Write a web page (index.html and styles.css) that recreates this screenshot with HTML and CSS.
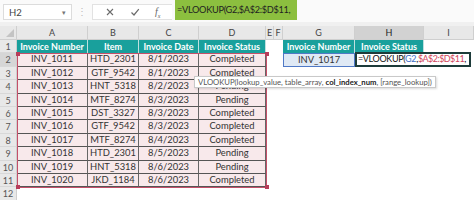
FILE: index.html
```html
<!DOCTYPE html>
<html lang="en">
<head>
    <meta charset="UTF-8" />
    <title>VLOOKUP sheet</title>
    <link rel="stylesheet" href="styles.css">
</head>
<body>
    <div id="formulaBar">
        <div class="name-box"><span>H2</span><span class="caret">&#9662;</span></div>
        <div class="grip">&#8942;</div>
        <div class="fx-box">
            <svg class="ico" viewBox="0 0 10 10" width="10" height="10"><path d="M2 2 L8 8 M8 2 L2 8" stroke="#6b6b6b" stroke-width="1.1" fill="none"/></svg>
            <svg class="ico" viewBox="0 0 10 10" width="10" height="10"><path d="M1.5 5.5 L4 8 L8.8 2.2" stroke="#6b6b6b" stroke-width="1.2" fill="none"/></svg>
            <span class="fx">f<sub>x</sub></span>
        </div>
        <div class="formula">=VLOOKUP(G2,$A$2:$D$11,</div>
    </div>
    <div class="band"></div>

    <div id="sheet">
        <!-- column headers -->
        <div class="corner"></div>
        <div class="colh">A</div>
        <div class="colh">B</div>
        <div class="colh">C</div>
        <div class="colh">D</div>
        <div class="colh">E</div>
        <div class="colh">F</div>
        <div class="colh">G</div>
        <div class="colh sel">H</div>
        <div class="colh">I</div>

        <!-- row 1 -->
        <div class="rowh">1</div>
        <div class="th">Invoice Number</div>
        <div class="th">Item</div>
        <div class="th">Invoice Date</div>
        <div class="th">Invoice Status</div>
        <div></div><div></div>
        <div class="th">Invoice Number</div>
        <div class="th">Invoice Status</div>
        <div></div>

        <!-- row 2 -->
        <div class="rowh sel">2</div>
        <div class="td">INV_1011</div><div class="td">HTD_2301</div><div class="td">8/1/2023</div><div class="td">Completed</div>
        <div></div><div></div>
        <div class="lookup">INV_1017</div>
        <div class="editing">=VLOOKUP(<span class="ref-g">G2</span>,<span class="ref-a">$A$2:$D$11</span>,</div>

        <div class="rowh">3</div>
        <div class="td">INV_1012</div><div class="td">GTF_9542</div><div class="td">8/1/2023</div><div class="td">Completed</div>
        <div class="rest"></div>

        <div class="rowh">4</div>
        <div class="td">INV_1013</div><div class="td">HNT_5318</div><div class="td">8/2/2023</div><div class="td">Pending</div>
        <div class="rest"></div>

        <div class="rowh">5</div>
        <div class="td">INV_1014</div><div class="td">MTF_8274</div><div class="td">8/3/2023</div><div class="td">Pending</div>
        <div class="rest"></div>

        <div class="rowh">6</div>
        <div class="td">INV_1015</div><div class="td">DST_3327</div><div class="td">8/3/2023</div><div class="td">Completed</div>
        <div class="rest"></div>

        <div class="rowh">7</div>
        <div class="td">INV_1016</div><div class="td">GTF_9542</div><div class="td">8/3/2023</div><div class="td">Completed</div>
        <div class="rest"></div>

        <div class="rowh">8</div>
        <div class="td">INV_1017</div><div class="td">MTF_8274</div><div class="td">8/4/2023</div><div class="td">Completed</div>
        <div class="rest"></div>

        <div class="rowh">9</div>
        <div class="td">INV_1018</div><div class="td">HTD_2301</div><div class="td">8/5/2023</div><div class="td">Pending</div>
        <div class="rest"></div>

        <div class="rowh">10</div>
        <div class="td">INV_1019</div><div class="td">HNT_5318</div><div class="td">8/6/2023</div><div class="td">Pending</div>
        <div class="rest"></div>

        <div class="rowh">11</div>
        <div class="td">INV_1020</div><div class="td">JKD_1184</div><div class="td">8/6/2023</div><div class="td">Completed</div>
        <div class="rest"></div>

        <div class="rowh">12</div>
        <div class="empty"></div>

        <!-- overlays -->
        <div class="range"><i class="h tl"></i><i class="h tr"></i><i class="h bl"></i><i class="h br"></i></div>
        <div class="tip">VLOOKUP(lookup_value, table_array, <b>col_index_num</b>, [range_lookup])</div>
    </div>
</body>
</html>
```

FILE: styles.css
```css
* { box-sizing: border-box; }
body {
    margin: 0;
    background: #fff;
    font-family: Lato, "Open Sans", sans-serif;
    color: #333;
    width: 474px;
    height: 200px;
    overflow: hidden;
}

/* ───────────  Formula bar  ─────────── */
#formulaBar {
    display: flex;
    align-items: flex-start;
    height: 22px;
    background: #fafafa;
}
.name-box {
    display: flex;
    justify-content: space-between;
    align-items: center;
    width: 69px;
    height: 16px;
    margin: 4px 0 0 3px;
    padding: 0 5px;
    background: #fff;
    border: 1px solid #dcdcdc;
    font-size: 9.5px;
    color: #444;
}
.caret { font-size: 7px; color: #777; }
.grip {
    width: 20px;
    margin-top: 5px;
    text-align: center;
    font-size: 10px;
    color: #bbb;
}
.fx-box {
    display: flex;
    align-items: center;
    justify-content: space-around;
    width: 80px;
    height: 16px;
    margin-top: 4px;
    padding: 0 4px;
    background: #fff;
    border: 1px solid #e2e2e2;
    border-right: none;
}
.fx {
    font-family: "Liberation Serif", serif;
    font-style: italic;
    font-size: 10px;
    color: #666;
}
.fx sub { font-size: 6px; }
.formula {
    width: 122px;
    height: 20px;
    margin-left: 3px;
    padding: 4px 0 0 2px;
    background: #8cbf3f;
    font-size: 9.2px;
    letter-spacing: -0.3px;
    color: #222;
    white-space: nowrap;
}
.band { height: 4px; background: #f0f0f0; }

/* ───────────  Grid  ─────────── */
#sheet {
    position: relative;
    display: grid;
    grid-template-columns: 17px 71px 51px 60px 67px 8px 9px 72px 69px 1fr;
    grid-template-rows: 14px;
    grid-auto-rows: 13.4px;
    font-size: 9px;
}
.corner {
    background: #e8e8e8;
    border-right: 1px solid #cfcfcf;
    border-bottom: 1px solid #cfcfcf;
    position: relative;
}
.corner::after {
    content: "";
    position: absolute;
    right: 2px;
    bottom: 2px;
    border-left: 8px solid transparent;
    border-bottom: 8px solid #c4c4c4;
}
.colh {
    background: #e8e8e8;
    border-right: 1px solid #cfcfcf;
    border-bottom: 1px solid #cfcfcf;
    text-align: center;
    line-height: 13px;
    color: #444;
    font-size: 9px;
}
.colh.sel { background: #d2d2d2; color: #222; }
.rowh {
    grid-column: 1;
    background: #e8e8e8;
    border-right: 1px solid #cfcfcf;
    border-bottom: 1px solid #d8d8d8;
    text-align: center;
    line-height: 13px;
    color: #555;
    font-size: 9px;
}
.rowh.sel { background: #d6d6d6; }
.rest { grid-column: 6 / -1; }
.empty { grid-column: 2 / -1; }

.th {
    background: #19a09c;
    color: #fff;
    font-weight: bold;
    text-align: center;
    line-height: 13.4px;
    border-right: 1px solid #bfe0df;
    white-space: nowrap;
}
.td {
    background: #f8e9eb;
    text-align: center;
    line-height: 12.4px;
    border-right: 1px solid #666;
    border-bottom: 1px solid #555;
    white-space: nowrap;
    font-size: 9.4px;
}
.lookup {
    background: #dfe9f5;
    border: 1px solid #4f79c6;
    text-align: center;
    line-height: 11.4px;
    font-size: 9.4px;
}
.editing {
    grid-column: 9 / -1;
    margin-right: 3px;
    margin-top: -1px;
    height: 14.6px;
    padding-left: 1px;
    border: 2px solid #1d3b3a;
    background: #fff;
    color: #111;
    line-height: 10.6px;
    font-size: 9px;
    letter-spacing: -0.35px;
    white-space: nowrap;
    overflow: hidden;
    z-index: 2;
}
.ref-g { color: #3d6fc6; }
.ref-a { color: #d0455b; letter-spacing: -0.55px; }

/* red reference range A2:D11 */
.range {
    position: absolute;
    left: 17px;
    top: 27.4px;
    width: 250px;
    height: 134.6px;
    border: 1.5px solid #c4506a;
    pointer-events: none;
}
.h {
    position: absolute;
    width: 4px;
    height: 4px;
    background: #b73d5a;
}
.tl { left: -2.5px; top: -2.5px; }
.tr { right: -2.5px; top: -2.5px; }
.bl { left: -2.5px; bottom: -2.5px; }
.br { right: -2.5px; bottom: -2.5px; }

.tip {
    position: absolute;
    left: 194px;
    top: 50px;
    height: 12px;
    padding: 0 3px;
    background: #fff;
    border: 1px solid #c9c9c9;
    box-shadow: 1px 1px 2px rgba(0,0,0,0.15);
    font-size: 7.7px;
    line-height: 10px;
    color: #555;
    white-space: nowrap;
    z-index: 3;
}
.tip b { color: #222; }
```
